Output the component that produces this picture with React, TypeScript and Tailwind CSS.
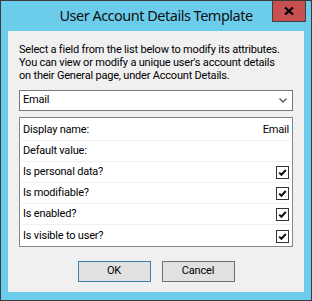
import React from "react";

const body = { fontFamily: 'Roboto, "Noto Sans", sans-serif' };
const title = { fontFamily: '"Noto Sans", "Open Sans", sans-serif' };

function Check() {
  return (
    <div className="w-[13px] h-[13px] border border-[#333333] bg-white flex items-center justify-center">
      <svg width="9" height="9" viewBox="0 0 9 9">
        <path d="M1.2 4.6 L3.4 6.8 L7.8 2" stroke="#111" strokeWidth="2" fill="none" />
      </svg>
    </div>
  );
}

const rows: { label: string; value?: string; check?: boolean }[] = [
  { label: "Display name:", value: "Email" },
  { label: "Default value:" },
  { label: "Is personal data?", check: true },
  { label: "Is modifiable?", check: true },
  { label: "Is enabled?", check: true },
  { label: "Is visible to user?", check: true },
];

export default function App() {
  return (
    <div className="w-[312px] h-[301px] bg-[#3a3a3a] p-px flex whitespace-nowrap overflow-hidden">
      <div className="flex-1 min-w-0 bg-[#6bcdeb] flex flex-col relative">
        <div className="h-[30px] flex items-center justify-center text-[14.5px] tracking-[-0.5px] text-[#111] pb-[1px]" style={title}>
          User Account Details Template
        </div>
        <div className="absolute right-[5px] top-0 w-[34px] h-[21px] bg-[#c75050] border border-t-0 border-[#3f3f3f] flex items-center justify-center">
          <svg width="10" height="8" viewBox="0 0 10 8">
            <path d="M1 0.5 L9 7.5 M9 0.5 L1 7.5" stroke="#000" strokeWidth="2.2" fill="none" />
          </svg>
        </div>
        <div className="mx-[7px] h-[261px] min-w-0 overflow-hidden bg-[#f0f0f0] px-[11px] pt-[12px] flex flex-col text-[11px] tracking-[-0.2px] text-black" style={body}>
          <div className="leading-[13px]">
            <div>Select a field from the list below to modify its attributes.</div>
            <div>You can view or modify a unique user's account details</div>
            <div>on their General page, under Account Details.</div>
          </div>
          <div className="mt-[8px] h-[21px] bg-white border border-[#7a7a7a] flex items-center pl-[3px] pr-[5px]">
            <span className="flex-1">Email</span>
            <svg width="8" height="5" viewBox="0 0 8 5">
              <path d="M0.5 0.5 L4 4 L7.5 0.5" stroke="#5a5a5a" strokeWidth="1.4" fill="none" />
            </svg>
          </div>
          <div className="mt-[6px] border border-[#828790] bg-white px-[1px] pt-[2px] flex flex-col">
            {rows.map((r, i) => (
              <div
                key={i}
                className={`h-[21px] flex items-center pl-[2px] pr-[2px] pt-[1px] ${i < rows.length - 1 ? "border-b border-[#f0f0f0]" : ""}`}
              >
                <span className="flex-1">{r.label}</span>
                {r.value && <span>{r.value}</span>}
                {r.check && <Check />}
              </div>
            ))}
          </div>
          <div className="mt-[14px] flex justify-center gap-[11px]">
            <div className="w-[73px] h-[21px] bg-[#e1e1e1] border border-[#3c7fb1] flex items-center justify-center">
              OK
            </div>
            <div className="w-[73px] h-[21px] bg-[#e1e1e1] border border-[#707070] flex items-center justify-center">
              Cancel
            </div>
          </div>
        </div>
      </div>
    </div>
  );
}
